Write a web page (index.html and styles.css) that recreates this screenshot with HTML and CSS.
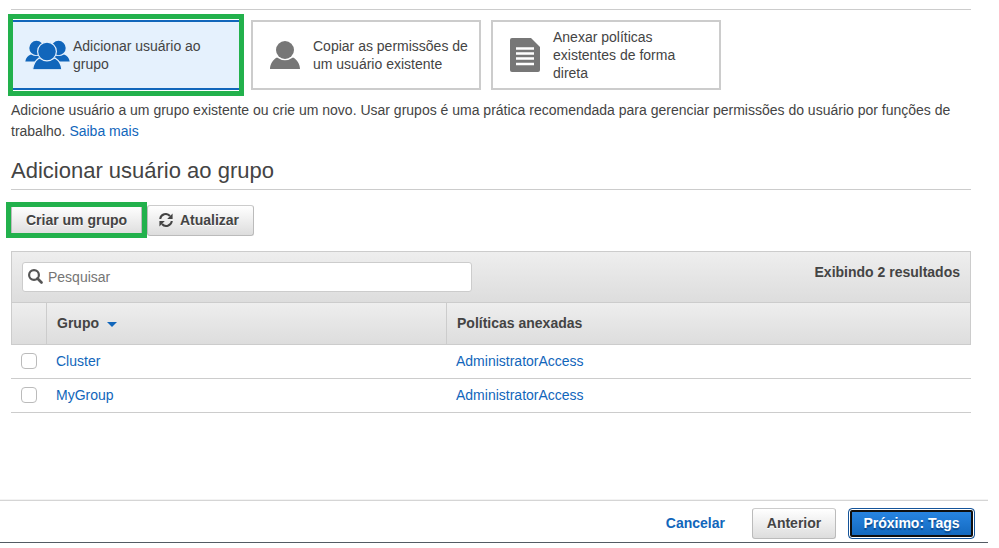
FILE: index.html
```
<!DOCTYPE html>
<html lang="pt-BR">
<head>
<meta charset="utf-8">
<title>Adicionar usuário</title>
<link rel="stylesheet" href="styles.css">
</head>
<body>
<main class="content">
  <div class="cards">
    <div class="card selected">
      <svg class="icon group" viewBox="0 0 46 30" width="46" height="30">
        <g fill="#1166bb">
          <circle cx="11.500" cy="8" r="7.200"/><circle cx="33.500" cy="8" r="7.200"/>
          <path d="M.3 21.500C.8 18 3 15.500 6 14.500q5.500 3 11 0l3 7zM44.700 21.500C44.200 18 42 15.500 39 14.500q-5.500 3-11 0l-3 7z"/>
        </g>
        <g fill="#1166bb" stroke="#e5f1fd" stroke-width="1.200">
          <path d="M7.500 30C8 24 10.500 20.500 14 18q8 4.500 16 0c4 2.500 6.500 6 7 12z"/>
          <circle cx="22" cy="11.500" r="9.400"/>
        </g>
        <path d="M5 29.200h35V31H5z" fill="#e5f1fd"/>
      </svg>
      <span>Adicionar usuário ao grupo</span>
    </div>
    <div class="card">
      <svg class="icon" viewBox="0 0 30 28" width="30" height="28">
        <circle cx="15" cy="9" r="9" fill="#777"/>
        <path d="M0 28c0-5 3-9.500 7-11.500q8 5.500 16 0c4 2 7 6.500 7 11.500z" fill="#777"/>
      </svg>
      <span>Copiar as permissões de um usuário existente</span>
    </div>
    <div class="card">
      <svg class="icon" viewBox="0 0 30 34" width="30" height="34">
        <path d="M2 0h19l9 9v23q0 2-2 2H2q-2 0-2-2V2q0-2 2-2z" fill="#777"/>
        <path d="M6 10.500h18M6 15.500h18M6 20.500h18M6 26h18" stroke="#fff" stroke-width="2.600"/>
      </svg>
      <span>Anexar políticas existentes de forma direta</span>
    </div>
    <i class="mark mark-card"></i>
  </div>
  <p class="intro">Adicione usuário a um grupo existente ou crie um novo. Usar grupos é uma prática recomendada para gerenciar permissões do usuário por funções de trabalho. <a>Saiba mais</a></p>
  <h2>Adicionar usuário ao grupo</h2>
  <div class="actions">
    <button class="btn create">Criar um grupo</button>
    <button class="btn refresh"><svg viewBox="0 0 14 14" width="14" height="14"><path d="M1.200 6A5.600 5.600 0 0 1 11 3M12.800 8A5.600 5.600 0 0 1 3 11" fill="none" stroke="#444" stroke-width="2"/><path d="M13.600.5V6H8.200zM.4 13.500V8h5.400z" fill="#444"/></svg>Atualizar</button>
    <i class="mark mark-button"></i>
  </div>
  <section class="table">
    <div class="toolbar">
      <div class="search"><svg viewBox="0 0 15 15" width="15" height="15"><circle cx="6" cy="6" r="4.900" fill="none" stroke="#555" stroke-width="2.200"/><path d="M9.500 9.500l4 4" stroke="#555" stroke-width="2.600" stroke-linecap="round"/></svg><span>Pesquisar</span></div>
      <strong>Exibindo 2 resultados</strong>
    </div>
    <div class="row head"><div></div><div>Grupo<i class="caret"></i></div><div>Políticas anexadas</div></div>
    <div class="row"><div><i class="box"></i></div><div><a>Cluster</a></div><div><a>AdministratorAccess</a></div></div>
    <div class="row"><div><i class="box"></i></div><div><a>MyGroup</a></div><div><a>AdministratorAccess</a></div></div>
  </section>
</main>
<footer class="footer">
  <a class="cancel">Cancelar</a>
  <button class="btn previous">Anterior</button>
  <button class="btn next">Próximo: Tags</button>
</footer>
</body>
</html>
```
FILE: styles.css
```
* { box-sizing: border-box; }
body {
  margin: 0;
  height: 548px;
  display: flex;
  flex-direction: column;
  overflow: hidden;
  background: #fff;
  color: #444;
  font: 14px/18px "Liberation Sans", Arial, sans-serif;
}
a { color: #1166bb; }
.content { width: 960px; margin: 9px 0 0 11px; border-top: 1px solid #ccc; padding-top: 10px; flex: 1; }
.cards { position: relative; display: flex; gap: 10px; }
.card { width: 230px; height: 70px; border: 2px solid #ccc; display: flex; align-items: center; padding-right: 10px; }
.card .icon { margin: 0 13px 0 17px; flex: none; }
.card .group { margin: 0 2px 0 12px; }
.card.selected { background: #e5f1fd; border-color: #1166bb; }
.mark { position: absolute; border: 5px solid #22b14c; }
.mark-card { left: -3px; top: -6px; width: 236px; height: 82px; box-shadow: inset 0 1px #fff, inset 0 -1px #fff; }
.intro { margin: 10px 0 0; line-height: 21px; }
h2 { margin: 14px 0 15px; height: 34px; border-bottom: 1px solid #ccc; font-size: 22px; line-height: 30px; font-weight: 400; }
.actions { position: relative; display: flex; height: 31px; }
.btn {
  height: 31px;
  padding: 0 0 2px;
  border: 1px solid #bbb;
  border-top-color: #ccc;
  border-radius: 3px;
  background: linear-gradient(#fff, #ddd);
  color: #444;
  font: bold 14px/18px "Liberation Sans", Arial, sans-serif;
  text-shadow: 0 1px #fff;
}
.create { width: 131px; margin-right: 5px; }
.refresh { width: 107px; display: flex; align-items: center; justify-content: center; gap: 7px; padding-right: 3px; }
.mark-button { left: -5px; top: -3px; width: 141px; height: 36px; }
.table { margin-top: 15px; }
.toolbar { height: 52px; display: flex; justify-content: space-between; padding: 10px; border: 1px solid #ccc; background: linear-gradient(#eee, #ddd); }
.toolbar strong { line-height: 20px; }
.search { width: 450px; height: 30px; display: flex; align-items: center; gap: 5px; padding-left: 5px; background: #fff; border: 1px solid #ccc; border-radius: 3px; color: #757575; }
.search svg { margin-top: -2px; }
.row { display: grid; grid-template-columns: 35px 400px 1fr; height: 34px; border-bottom: 1px solid #ccc; }
.row > div { display: flex; align-items: center; padding: 0 0 2px 10px; }
.head { height: 42px; border: 1px solid #ccc; border-top: 0; background: linear-gradient(#eee, #ddd); font-weight: 700; grid-template-columns: 34px 400px 1fr; }
.head > div + div { border-left: 1px solid #ccc; }
.caret { margin-left: 8px; margin-top: 3px; border: 5px solid transparent; border-top-color: #1166bb; border-bottom: 0; }
.box { width: 16px; height: 16px; border: 1px solid #bbb; border-radius: 4px; }
.footer { width: 988px; height: 43px; margin-bottom: 5px; display: flex; align-items: flex-start; justify-content: flex-end; padding: 7px 13px 0 0; border-top: 1px solid #d5d5d5; border-bottom: 1px solid #545b64; box-shadow: 0 -1px #f3f3f3; }
.cancel { font-weight: 700; margin: 6px 27px 0 0; }
.previous { width: 84px; margin-right: 12px; }
.next { width: 127px; border: 1px solid #14549a; border-radius: 4px; color: #fff; background: linear-gradient(#2a88e6, #1166bb); box-shadow: inset 0 0 0 1px #fff, inset 0 0 0 3px #101010; text-shadow: 0 2px 1px #0d4a8c; }
```
